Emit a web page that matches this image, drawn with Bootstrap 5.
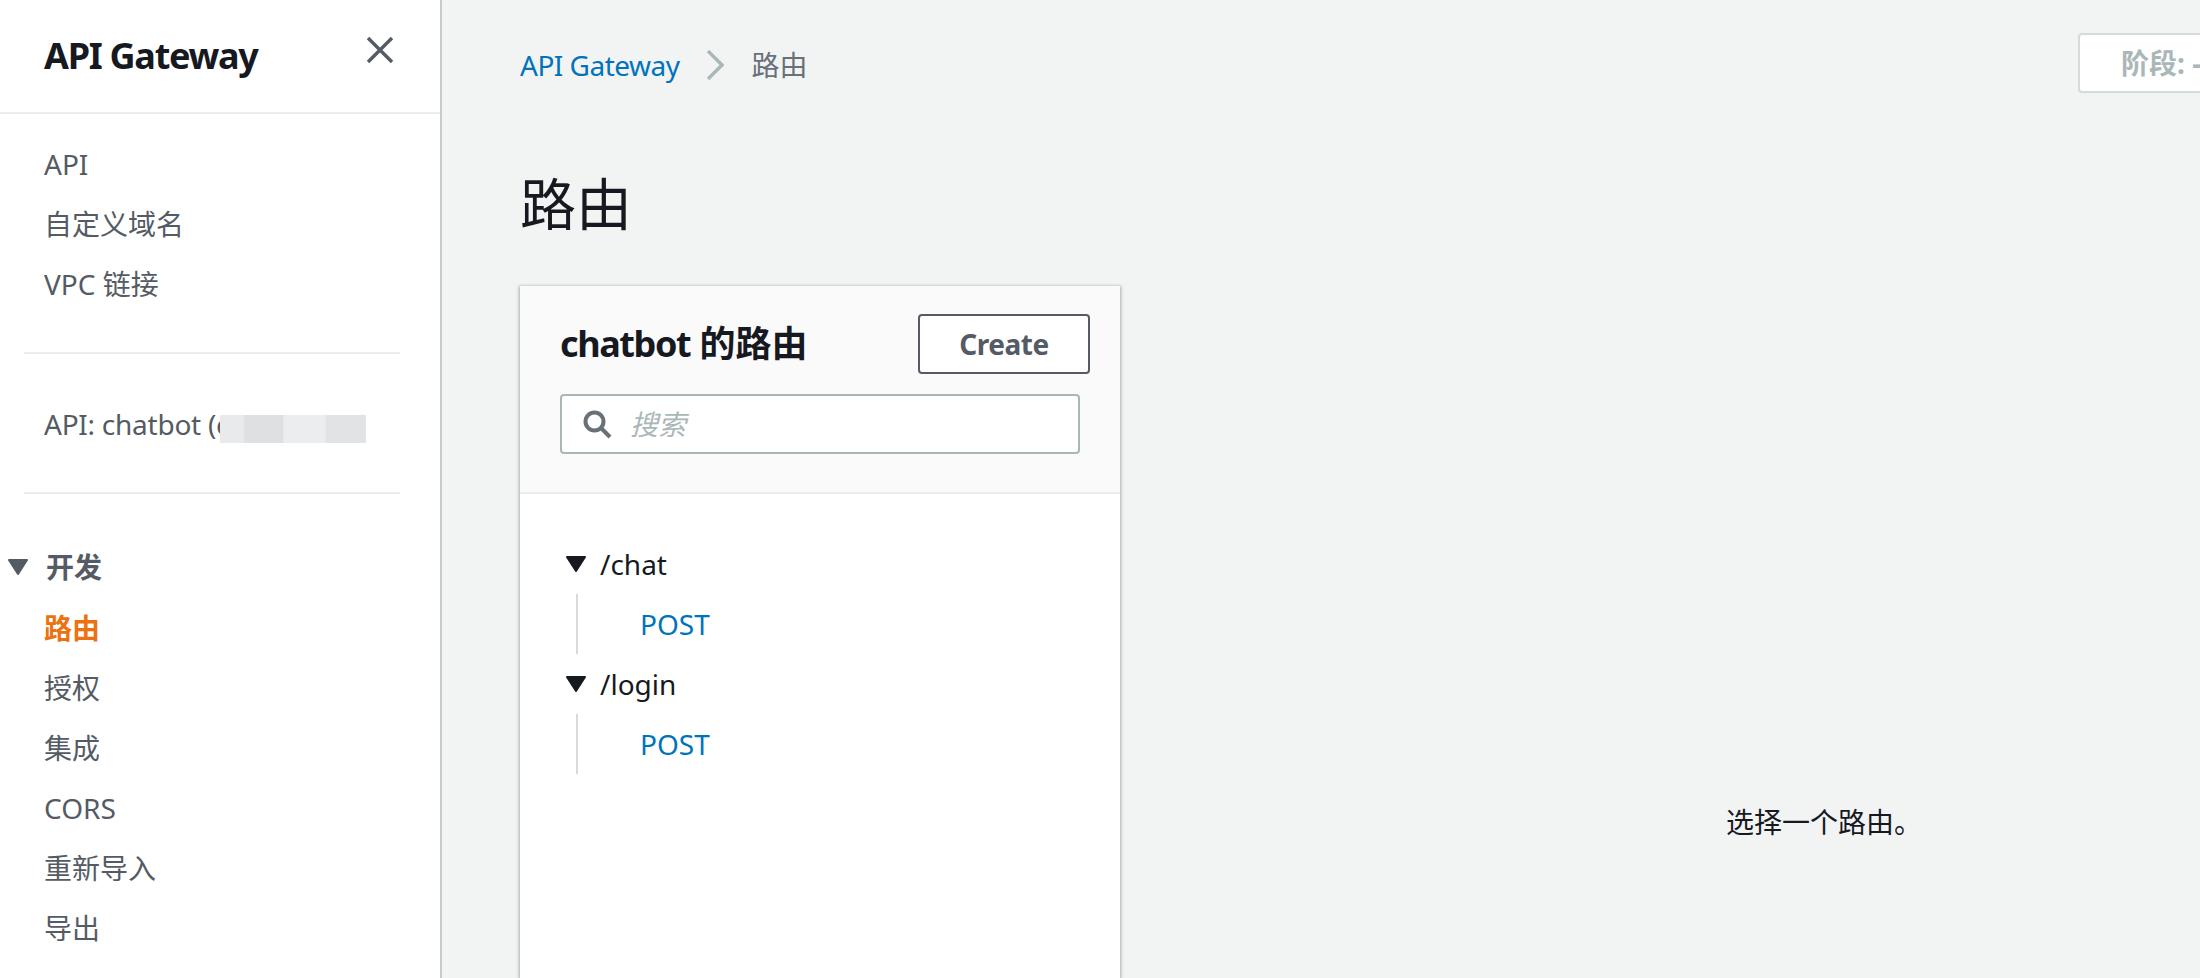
<!DOCTYPE html>
<html lang="zh-CN">
<head>
<meta charset="utf-8">
<title>路由</title>
<link href="https://cdn.jsdelivr.net/npm/bootstrap@5.3.0/dist/css/bootstrap.min.css" rel="stylesheet">
<style>
html,body{height:978px;overflow:hidden}
body{font-family:"Noto Sans","Noto Sans CJK SC",sans-serif;font-size:28px;line-height:40px;color:#16191f;background:#f2f3f3}
a{text-decoration:none}
.shell{height:978px;overflow:hidden}
.side{width:442px;flex:none;background:#fff;border-right:2px solid #c6cccd}
.side-head{height:114px;padding:0 44px;border-bottom:2px solid #eaeded}
.side-title{font-size:36px;font-weight:700;line-height:44px;color:#16191f;margin:0;letter-spacing:-1.27px}
.side-close{margin:-12px 1px 0 0;line-height:0}
.side-link{display:block;height:60px;line-height:60px;color:#545b64;padding-left:44px}
.side-sep{height:2px;background:#eaeded;margin:0 24px 0 24px;width:376px}
.side-list{padding:20px 0 38px}
.side-api{padding:51px 0 50px;height:138px}
.side-api .side-link{height:38px;line-height:38px;position:relative;white-space:nowrap;letter-spacing:-.25px}
.blur-box{position:absolute;left:220px;top:10px;width:146px;height:28px;background:linear-gradient(90deg,#e9eaeb 0,#e9eaeb 16%,#dfe0e2 17%,#dfe0e2 43%,#ecedee 44%,#ecedee 72%,#e2e3e4 73%)}
.side-group{padding-top:42px}
.group-head{height:62px;line-height:60px;font-weight:700;color:#545b64;padding-left:8px}
.group-head svg{margin-right:18px}
.side-link.on{color:#ec7211;font-weight:700}
.main-area{padding:0 0 0 78px;min-width:0}
.crumb-row{height:130px}
.crumb-link{color:#0073bb;letter-spacing:-.5px}
.crumb-now{color:#687078}
.crumb-sep{margin:0 28px 0 26px;line-height:0}
.stage-box{width:122px;height:60px;margin-left:auto;flex:none;background:#fff;border:2px solid #d5dbdb;border-radius:4px;border-right:0;border-top-right-radius:0;border-bottom-right-radius:0;color:#aab7b8;font-weight:700;padding-left:41px;line-height:56px;white-space:nowrap;overflow:hidden;margin-top:-5px}
.page-title{font-size:56px;font-weight:400;line-height:72px;margin:37px 0 47px;color:#16191f;height:72px}
.work{min-height:692px}
.route-panel{width:600px;flex:none;background:#fff;box-shadow:0 1px 3px 1px rgba(0,28,36,.3);border:0;border-radius:0}
.route-head{height:208px;background:#fafafa;border-bottom:2px solid #eaeded;padding:28px 30px 0 40px}
.route-title{font-size:36px;font-weight:700;line-height:60px;margin:0;color:#16191f}
.route-title span{letter-spacing:-1.4px}
.btn-create{width:172px;height:60px;padding:0;font-size:28px;line-height:56px;font-weight:700;color:#545b64;background:#fff;border:2px solid #545b64;border-radius:4px;letter-spacing:-.5px}
.route-search{width:520px;height:60px;margin-top:20px;background:#fff;border:2px solid #aab7b8;border-radius:4px;padding-left:20px}
.route-search svg{margin-right:18px}
.route-search span{color:#aab7b8;font-style:italic}
.route-body{padding:40px 0 0 46px}
.tree-row{height:60px;line-height:60px;color:#16191f}
.tree-row svg{margin-right:14px}
.tree-kids{margin-left:10px;border-left:2px solid #d5dbdb;height:60px;line-height:60px;padding-left:62px}
.tree-kids a{color:#0073bb}
.empty-note{flex:1 1 0;padding-top:516px;padding-left:606px;white-space:nowrap}
</style>
</head>
<body>
<div class="shell d-flex">
  <aside class="side d-flex flex-column">
    <div class="side-head d-flex align-items-center justify-content-between">
      <h2 class="side-title">API Gateway</h2>
      <a class="side-close" href="#" aria-label="关闭"><svg width="30" height="30" viewBox="0 0 30 30"><path d="M3 3 L27 27 M27 3 L3 27" stroke="#545b64" stroke-width="3.4" fill="none"/></svg></a>
    </div>
    <nav class="side-list">
      <a class="side-link" href="#">API</a>
      <a class="side-link" href="#">自定义域名</a>
      <a class="side-link" href="#">VPC 链接</a>
    </nav>
    <div class="side-sep"></div>
    <div class="side-api"><a class="side-link" href="#">API: chatbot (e<span class="blur-box"></span></a></div>
    <div class="side-sep"></div>
    <nav class="side-group">
      <div class="group-head d-flex align-items-center"><svg width="20" height="16" viewBox="0 0 20 16"><path d="M1 1H19L10 15Z" fill="#545b64" stroke="#545b64" stroke-width="2" stroke-linejoin="round"/></svg>开发</div>
      <a class="side-link on" href="#">路由</a>
      <a class="side-link" href="#">授权</a>
      <a class="side-link" href="#">集成</a>
      <a class="side-link" href="#">CORS</a>
      <a class="side-link" href="#">重新导入</a>
      <a class="side-link" href="#">导出</a>
    </nav>
  </aside>
  <main class="main-area flex-grow-1">
    <div class="crumb-row d-flex align-items-center">
      <a class="crumb-link" href="#">API Gateway</a>
      <span class="crumb-sep"><svg width="18" height="30" viewBox="0 0 18 30"><path d="M2 1 L16 15 L2 29" stroke="#aab7b8" stroke-width="3.4" fill="none"/></svg></span>
      <span class="crumb-now">路由</span>
      <div class="stage-box">阶段: -</div>
    </div>
    <h1 class="page-title">路由</h1>
    <div class="work d-flex">
      <section class="route-panel card">
        <div class="route-head">
          <div class="d-flex align-items-center justify-content-between">
            <h3 class="route-title"><span>chatbot</span> 的路由</h3>
            <button class="btn btn-create" type="button">Create</button>
          </div>
          <div class="route-search d-flex align-items-center">
            <svg width="30" height="30" viewBox="0 0 30 30"><circle cx="12.5" cy="12.5" r="9" stroke="#687078" stroke-width="4" fill="none"/><path d="M19 19 L28 28" stroke="#687078" stroke-width="4"/></svg>
            <span>搜索</span>
          </div>
        </div>
        <div class="route-body">
          <div class="tree-row d-flex align-items-center"><svg width="20" height="16" viewBox="0 0 20 16"><path d="M1 1H19L10 15Z" fill="#16191f" stroke="#16191f" stroke-width="2" stroke-linejoin="round"/></svg>/chat</div>
          <div class="tree-kids"><a href="#">POST</a></div>
          <div class="tree-row d-flex align-items-center"><svg width="20" height="16" viewBox="0 0 20 16"><path d="M1 1H19L10 15Z" fill="#16191f" stroke="#16191f" stroke-width="2" stroke-linejoin="round"/></svg>/login</div>
          <div class="tree-kids"><a href="#">POST</a></div>
        </div>
      </section>
      <div class="empty-note">选择一个路由。</div>
    </div>
  </main>
</div>
<script src="https://cdn.jsdelivr.net/npm/bootstrap@5.3.0/dist/js/bootstrap.bundle.min.js"></script>
</body>
</html>
